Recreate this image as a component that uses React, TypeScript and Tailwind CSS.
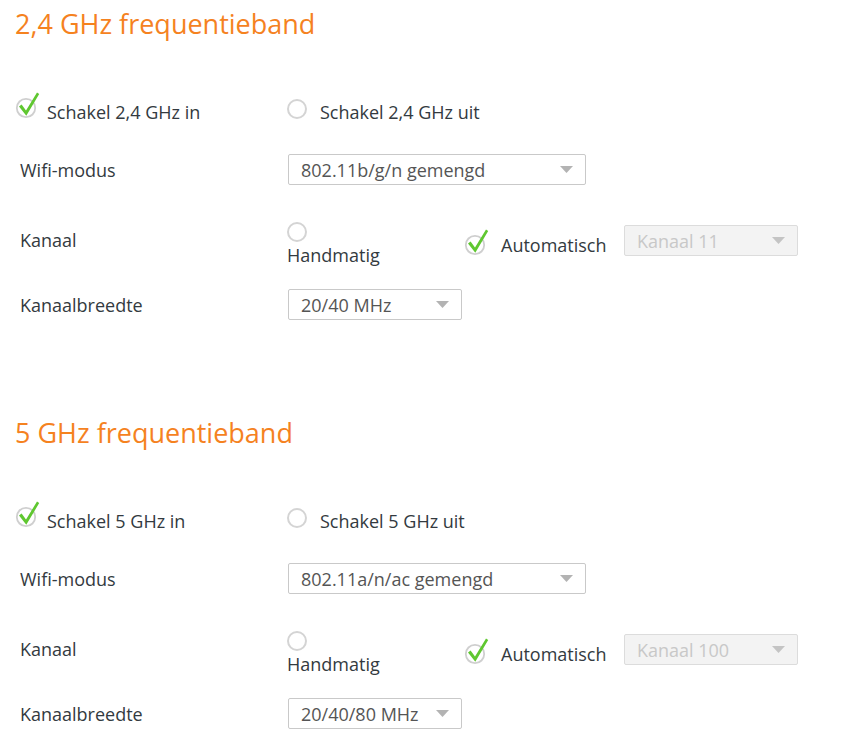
import React from "react";

const CheckIcon = () => (
  <svg width="26" height="29" viewBox="0 0 26 29" className="shrink-0">
    <circle cx="12" cy="17" r="9.2" fill="none" stroke="#cfcfcf" strokeWidth="1.8" />
    <path d="M5 15.5 L7.6 13.6 L12 19.6 L23 1.5 L25.2 3 L12.3 24.8 Z" fill="#5fc730" />
  </svg>
);

const Radio = () => (
  <span className="block h-[20px] w-[20px] shrink-0 rounded-full border-2 border-[#d4d4d4] bg-white" />
);

const Caret = ({ color }: { color: string }) => (
  <svg width="13" height="7" viewBox="0 0 13 7" className="shrink-0">
    <path d="M0 0 L13 0 L6.5 7 Z" fill={color} />
  </svg>
);

const Select = ({ value, w, disabled }: { value: string; w: string; disabled?: boolean }) => (
  <div
    className={`flex h-[31px] items-center justify-between rounded-[2px] border pl-[12px] pr-[12px] ${w} ${
      disabled ? "border-[#dcdcdc] bg-[#f3f3f3] text-[#c8c8c8]" : "border-[#c9c9c9] bg-white text-[#555555]"
    }`}
  >
    <span className="text-[18px] leading-[24px]">{value}</span>
    <Caret color={disabled ? "#c4c4c4" : "#b3b3b3"} />
  </div>
);

const Section = ({
  title,
  band,
  mode,
  channel,
  width,
  first,
}: {
  title: string;
  band: string;
  mode: string;
  channel: string;
  width: string;
  first?: boolean;
}) => (
  <section className={first ? "" : "mt-[89px]"}>
    <h2 className="flex h-[48px] items-center pl-[15px] text-[27px] font-normal text-[#f5821f]">{title}</h2>

    <div className="mt-[43px] flex items-start">
      <div className="flex w-[287px] items-start pl-[14px]">
        <CheckIcon />
        <span className="ml-[7px] mt-[9px]">Schakel {band} GHz in</span>
      </div>
      <div className="flex items-start">
        <span className="mt-[8px]">
          <Radio />
        </span>
        <span className="ml-[13px] mt-[9px]">Schakel {band} GHz uit</span>
      </div>
    </div>

    <div className="mt-[30px] flex h-[31px] items-center">
      <div className="w-[288px] pl-[20px]">Wifi-modus</div>
      <Select value={mode} w="w-[298px]" />
    </div>

    <div className="mt-[37px] flex items-start">
      <div className="w-[287px] pl-[20px] pt-[6px]">Kanaal</div>
      <div className="flex w-[176px] flex-col items-start">
        <Radio />
        <span className="mt-[1px]">Handmatig</span>
      </div>
      <div className="flex w-[161px] items-start">
        <span className="mt-[6px]">
          <CheckIcon />
        </span>
        <span className="ml-[12px] mt-[11px]">Automatisch</span>
      </div>
      <div className="mt-[3px]">
        <Select value={channel} w="w-[174px]" disabled />
      </div>
    </div>

    <div className="mt-[22px] flex h-[31px] items-center">
      <div className="w-[288px] pl-[20px]">Kanaalbreedte</div>
      <Select value={width} w="w-[174px]" />
    </div>
  </section>
);

export default function App() {
  return (
    <div
      className="min-h-[746px] w-[847px] bg-white text-[18px] leading-[24px] text-[#333a40]"
      style={{ fontFamily: "'Open Sans', Lato, sans-serif" }}
    >
      <Section
        first
        title="2,4 GHz frequentieband"
        band="2,4"
        mode="802.11b/g/n gemengd"
        channel="Kanaal 11"
        width="20/40 MHz"
      />
      <Section
        title="5 GHz frequentieband"
        band="5"
        mode="802.11a/n/ac gemengd"
        channel="Kanaal 100"
        width="20/40/80 MHz"
      />
    </div>
  );
}
